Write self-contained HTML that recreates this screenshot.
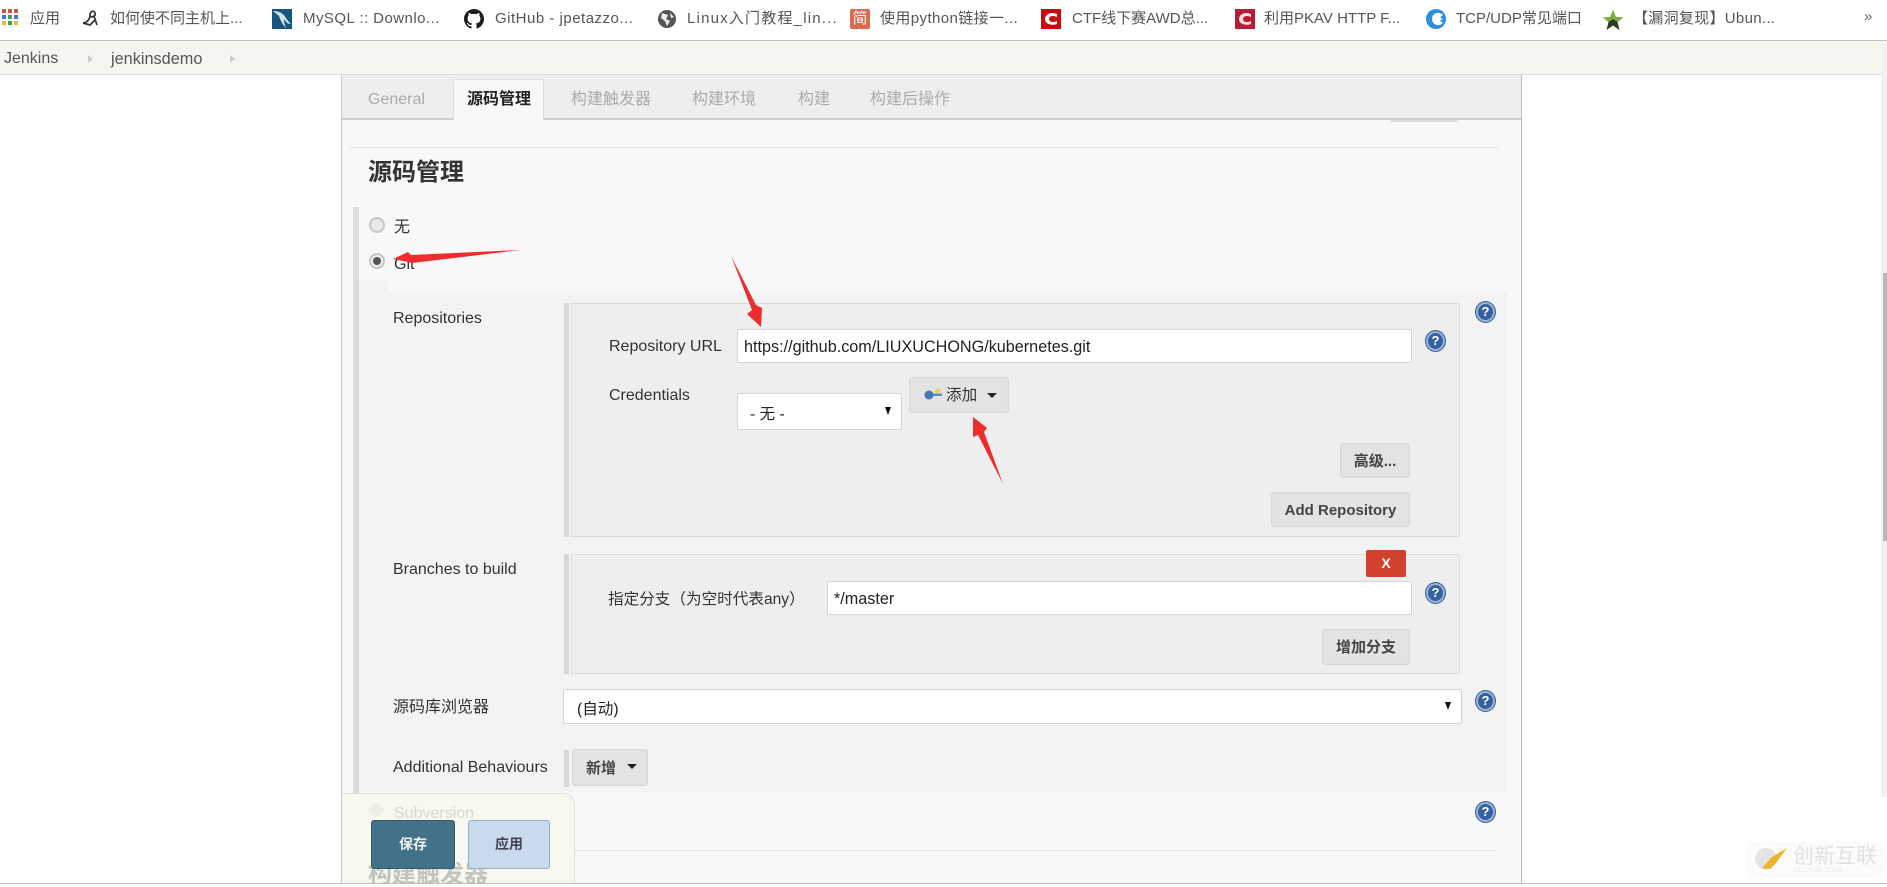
<!DOCTYPE html>
<html>
<head>
<meta charset="utf-8">
<style>
html,body{margin:0;padding:0;width:1887px;height:887px;overflow:hidden;background:#fff}
body{position:relative;font-family:"Liberation Sans","Noto Sans CJK SC",sans-serif;color:#333}
.a{position:absolute}
.t{position:absolute;white-space:nowrap;font-size:16px;line-height:20px;height:20px;color:#333}
.bm{position:absolute;white-space:nowrap;font-size:15px;line-height:20px;top:9px;color:#555}
.ic{position:absolute;top:9px;width:20px;height:20px}
.tab{position:absolute;white-space:nowrap;font-size:15.6px;line-height:20px;top:90px;color:#aaa}
.btn{position:absolute;background:#e3e3e3;border:1px solid #d8d8d8;border-radius:3px;box-sizing:border-box;box-shadow:inset 0 0 0 1px #e0e0e0;font-size:15px;font-weight:bold;color:#444;text-align:center;white-space:nowrap}
.inp{position:absolute;background:#fff;border:1px solid #d4d4d4;border-radius:2px;box-sizing:border-box;font-size:16.2px;color:#222;white-space:nowrap}
.block{position:absolute;background:#eee;border:1px solid #ddd;box-sizing:border-box}
.bar{position:absolute;background:#d8d8d8}
.help{position:absolute;width:21px;height:22px;border-radius:50%;box-sizing:border-box;background:#35619f;border:1px solid #3b5f98;box-shadow:inset 0 0 0 2px #9fb6da;color:#fff;font-size:13px;font-weight:bold;line-height:20px;text-align:center}
.caret{position:absolute;width:0;height:0;border-left:5px solid transparent;border-right:5px solid transparent;border-top:5px solid #222}
.sel{position:absolute;width:0;height:0;border-left:3.5px solid transparent;border-right:3.5px solid transparent;border-top:8px solid #111}
.radio{position:absolute;width:16px;height:16px;border-radius:50%;box-sizing:border-box;border:2px solid #c6c6c6;background:#e8e8e8}
</style>
</head>
<body>
<!-- Bookmarks bar -->
<div class="a" style="left:0;top:0;width:1887px;height:40px;background:#fff"></div>
<div class="a" style="left:0;top:40px;width:1887px;height:1px;background:#c4c4c4"></div>
<svg class="a" style="left:2px;top:9px" width="16" height="17" viewBox="0 0 16 17">
<rect x="0" y="0" width="4" height="4" fill="#d9503f"/><rect x="6" y="0" width="4" height="4" fill="#d9503f"/><rect x="12" y="0" width="4" height="4" fill="#d9503f"/>
<rect x="0" y="6" width="4" height="4" fill="#3b78d8"/><rect x="6" y="6" width="4" height="4" fill="#3aa757"/><rect x="12" y="6" width="4" height="4" fill="#3b78d8"/>
<rect x="0" y="12" width="4" height="4" fill="#f1b92e"/><rect x="6" y="12" width="4" height="4" fill="#3aa757"/><rect x="12" y="12" width="4" height="4" fill="#f1b92e"/>
</svg>
<div class="bm" style="left:30px">应用</div>
<svg class="a" style="left:81px;top:8px" width="19" height="20" viewBox="0 0 19 20"><path d="M2 15 C5 15 9 12 9 7 C9 3 13 2 14 5 C15 8 11 10 9 8 M13 8 L16 17 M2 15 L9 17 L14 12" fill="none" stroke="#333" stroke-width="1.7"/></svg>
<div class="bm" style="left:110px">如何使不同主机上...</div>
<svg class="ic" style="left:272px" viewBox="0 0 20 20"><rect width="20" height="20" fill="#15577f"/><path d="M1 2 C7 2 11 4 14 9 C16 12 18 14 19 15 C15 15 14 13 12 10 C12 14 13 16 14 19 C10 15 8 10 7 7 C5 5 3 4 1 2Z" fill="#cfe0ea"/></svg>
<div class="bm" style="left:303px;letter-spacing:.45px">MySQL :: Downlo...</div>
<svg class="ic" style="left:464px" viewBox="0 0 16 16"><path fill="#1b1f23" d="M8 0C3.58 0 0 3.58 0 8c0 3.54 2.29 6.53 5.47 7.59.4.07.55-.17.55-.38 0-.19-.01-.82-.01-1.49-2.01.37-2.53-.49-2.69-.94-.09-.23-.48-.94-.82-1.13-.28-.15-.68-.52-.01-.53.63-.01 1.08.58 1.23.82.72 1.21 1.87.87 2.33.66.07-.52.28-.87.51-1.07-1.78-.2-3.64-.89-3.64-3.95 0-.87.31-1.59.82-2.15-.08-.2-.36-1.02.08-2.12 0 0 .67-.21 2.2.82.64-.18 1.32-.27 2-.27s1.36.09 2 .27c1.53-1.04 2.2-.82 2.2-.82.44 1.1.16 1.92.08 2.12.51.56.82 1.27.82 2.15 0 3.07-1.87 3.75-3.65 3.95.29.25.54.73.54 1.48 0 1.07-.01 1.93-.01 2.2 0 .21.15.46.55.38A8.01 8.01 0 0 0 16 8c0-4.42-3.58-8-8-8z"/></svg>
<div class="bm" style="left:495px;letter-spacing:.5px">GitHub - jpetazzo...</div>
<svg class="ic" style="left:658px;width:18px;height:18px;top:10px" viewBox="0 0 18 18"><circle cx="9" cy="9" r="9" fill="#555"/><path d="M4 3 L10 5 L8 9 L12 11 L9 16 L7 11 L3 8Z M12 3 L16 7 L13 8Z" fill="#eee"/></svg>
<div class="bm" style="left:687px;letter-spacing:1.2px">Linux入门教程_lin...</div>
<div class="a" style="left:850px;top:9px;width:20px;height:20px;background:#dc6a51;border-radius:2px;color:#fff;font-size:15px;line-height:20px;text-align:center">简</div>
<div class="bm" style="left:880px;letter-spacing:.4px">使用python链接一...</div>
<svg class="ic" style="left:1041px" viewBox="0 0 20 20"><rect width="20" height="20" fill="#c70c12"/><path d="M16 5 C9 2 4 6 4 10 C4 15 10 17 16 15 L16 12 C12 14 8 13 8 10 C8 7 12 6 16 8Z" fill="#fff"/></svg>
<div class="bm" style="left:1072px">CTF线下赛AWD总...</div>
<svg class="ic" style="left:1235px" viewBox="0 0 20 20"><rect width="20" height="20" fill="#b71d33"/><path d="M16 5 C9 2 4 6 4 10 C4 15 10 17 16 15 L16 12 C12 14 8 13 8 10 C8 7 12 6 16 8Z" fill="#f3dfe2"/></svg>
<div class="bm" style="left:1264px">利用PKAV HTTP F...</div>
<svg class="ic" style="left:1426px" viewBox="0 0 20 20"><circle cx="10" cy="10" r="10" fill="#2a8fe0"/><path d="M17 6 C13 2 6 4 6 10 C6 16 13 18 17 14 L14 11.5 L17 10 L14 8.5Z" fill="#fff"/></svg>
<div class="bm" style="left:1456px">TCP/UDP常见端口</div>
<svg class="ic" style="left:1603px;top:10px" viewBox="0 0 20 20"><path d="M10 0 L12.8 7 L20 7.5 L14.5 12 L16.5 20 L10 15.5 L3.5 20 L5.5 12 L0 7.5 L7.2 7Z" fill="#2c3a20"/><path d="M10 0 L12.8 7 L20 7.5 L14.5 12 L10 9 L5.5 12 L0 7.5 L7.2 7Z" fill="#7fae3a"/></svg>
<div class="bm" style="left:1633px;letter-spacing:.3px">【漏洞复现】Ubun...</div>
<div class="bm" style="left:1864px;top:7px;color:#666">»</div>

<!-- Breadcrumb bar -->
<div class="a" style="left:0;top:41px;width:1887px;height:33px;background:#f6f6f1"></div>
<div class="a" style="left:0;top:74px;width:1887px;height:1px;background:#dedede"></div>
<div class="t" style="left:4px;top:49px;color:#555">Jenkins</div>
<div class="a" style="left:88px;top:55px;border-left:5px solid #ccc;border-top:4px solid transparent;border-bottom:4px solid transparent"></div>
<div class="t" style="left:111px;top:49px;font-size:16.3px;color:#555">jenkinsdemo</div>
<div class="a" style="left:230px;top:55px;border-left:5px solid #ccc;border-top:4px solid transparent;border-bottom:4px solid transparent"></div>

<!-- Main panel -->
<div class="a" style="left:342px;top:75px;width:1179px;height:808px;background:#f8f8f8"></div>
<div class="a" style="left:341px;top:75px;width:1px;height:808px;background:#c8c8c8"></div>
<div class="a" style="left:1521px;top:75px;width:1px;height:808px;background:#c0c0c0"></div>

<!-- Tabs -->
<div class="a" style="left:342px;top:75px;width:1179px;height:44px;background:#eee"></div>
<div class="a" style="left:342px;top:118px;width:1179px;height:2px;background:#cfcfcf"></div>
<div class="a" style="left:453px;top:79px;width:91px;height:41px;background:#f8f8f8;border:1px solid #ddd;border-bottom:none;border-radius:3px 3px 0 0;box-sizing:border-box"></div>
<div class="tab" style="left:368px;font-size:16px">General</div>
<div class="tab" style="left:467px;color:#222;font-weight:bold;font-size:16px">源码管理</div>
<div class="tab" style="left:571px;font-size:16px">构建触发器</div>
<div class="tab" style="left:692px;font-size:16px">构建环境</div>
<div class="tab" style="left:798px;font-size:16px">构建</div>
<div class="tab" style="left:870px;font-size:16px">构建后操作</div>
<div class="a" style="left:1391px;top:120px;width:67px;height:2px;background:#ddd"></div>
<div class="a" style="left:350px;top:147px;width:1148px;height:1px;background:#e4e4e4"></div>

<div class="t" style="left:368px;top:158px;font-size:24px;line-height:30px;height:30px;font-weight:bold;color:#333">源码管理</div>

<!-- Left bar and git region -->
<div class="a" style="left:358px;top:280px;width:30px;height:13px;background:#f3f3f3"></div>
<div class="a" style="left:358px;top:293px;width:1149px;height:499px;background:#f3f3f3"></div>
<div class="bar" style="left:353px;top:207px;width:6px;height:586px;background:#dcdcdc"></div>

<div class="radio" style="left:369px;top:217px"></div>
<div class="t" style="left:394px;top:218px">无</div>
<div class="radio" style="left:369px;top:253px;background:#eee"></div>
<div class="a" style="left:373px;top:257px;width:8px;height:8px;border-radius:50%;background:#555"></div>
<div class="t" style="left:394px;top:255px">Git</div>

<!-- Repositories -->
<div class="t" style="left:393px;top:309px">Repositories</div>
<div class="bar" style="left:564px;top:303px;width:5px;height:234px"></div>
<div class="block" style="left:571px;top:303px;width:889px;height:234px"></div>
<div class="t" style="left:609px;top:337px">Repository URL</div>
<div class="inp" style="left:737px;top:329px;width:675px;height:34px;padding:0 6px;line-height:34px">https://github.com/LIUXUCHONG/kubernetes.git</div>
<div class="help" style="left:1425px;top:330px">?</div>
<div class="help" style="left:1475px;top:301px">?</div>
<div class="t" style="left:609px;top:386px">Credentials</div>
<div class="inp" style="left:737px;top:393px;width:165px;height:37px;padding:0 12px;line-height:42px;font-size:15.6px">- 无 -</div>
<div class="sel" style="left:885px;top:407px"></div>
<div class="btn" style="left:909px;top:377px;width:100px;height:36px;line-height:34px;font-weight:normal;color:#333"></div>
<svg class="a" style="left:923px;top:386px" width="20" height="16" viewBox="0 0 20 16"><path d="M11 6 Q15 1 18 3 Q19 6 14 7Z" fill="#f2d24b"/><rect x="7" y="7.5" width="12" height="2.5" fill="#5c8cc0"/><circle cx="6" cy="9" r="4.5" fill="#3f78b4"/></svg>
<div class="t" style="left:946px;top:386px;font-size:15.6px;color:#333">添加</div>
<div class="caret" style="left:987px;top:393px"></div>
<div class="btn" style="left:1340px;top:443px;width:70px;height:35px;line-height:35px">高级...</div>
<div class="btn" style="left:1271px;top:492px;width:139px;height:35px;line-height:35px">Add Repository</div>

<!-- Branches -->
<div class="t" style="left:393px;top:560px">Branches to build</div>
<div class="bar" style="left:564px;top:554px;width:5px;height:120px"></div>
<div class="block" style="left:571px;top:554px;width:889px;height:120px"></div>
<div class="a" style="left:1366px;top:550px;width:40px;height:27px;background:#d2402f;border-radius:2px;color:#fff;font-size:14px;font-weight:bold;line-height:27px;text-align:center">X</div>
<div class="t" style="left:608px;top:590px;font-size:15.6px">指定分支（为空时代表any）</div>
<div class="inp" style="left:827px;top:581px;width:585px;height:34px;padding:0 6px;line-height:34px">*/master</div>
<div class="help" style="left:1425px;top:582px">?</div>
<div class="btn" style="left:1322px;top:629px;width:88px;height:36px;line-height:36px">增加分支</div>

<!-- Source browser -->
<div class="t" style="left:393px;top:698px">源码库浏览器</div>
<div class="inp" style="left:563px;top:689px;width:899px;height:35px;padding:0 13px;line-height:40px;font-size:15.6px">(自动)</div>
<div class="sel" style="left:1445px;top:702px"></div>
<div class="help" style="left:1475px;top:690px">?</div>

<!-- Additional -->
<div class="t" style="left:393px;top:758px">Additional Behaviours</div>
<div class="bar" style="left:564px;top:750px;width:5px;height:37px"></div>
<div class="btn" style="left:572px;top:749px;width:76px;height:37px;line-height:37px;text-align:left;padding-left:13px">新增</div>
<div class="caret" style="left:627px;top:764px"></div>

<!-- Below -->
<div class="help" style="left:1475px;top:801px">?</div>
<div class="a" style="left:575px;top:850px;width:922px;height:1px;background:#e4e4e4"></div>

<!-- Sticky footer -->
<div class="a" style="left:342px;top:793px;width:233px;height:90px;background:#f8f8f0;border:1px solid #e0e0da;border-left:none;border-bottom:none;border-radius:0 12px 0 0;box-sizing:border-box"></div>
<div class="a" style="left:369px;top:803px;width:14px;height:14px;border-radius:50%;background:#efefe8"></div>
<div class="t" style="left:394px;top:804px;color:#d8d8d2">Subversion</div>
<div class="a" style="left:368px;top:860px;width:125px;height:23px;overflow:hidden"><div style="font-size:24px;font-weight:bold;color:#c4c4bd;line-height:30px;white-space:nowrap;margin-top:0">构建触发器</div></div>
<div class="a" style="left:371px;top:820px;width:84px;height:49px;box-sizing:border-box;background:#427287;border:1px solid #2f5a70;border-radius:3px;color:#f2f2f2;font-size:14px;font-weight:bold;line-height:47px;text-align:center">保存</div>
<div class="a" style="left:468px;top:820px;width:82px;height:49px;box-sizing:border-box;background:#c8daec;border:1px solid #8fb0d0;border-radius:3px;color:#445;font-size:14px;font-weight:bold;line-height:47px;text-align:center">应用</div>

<!-- Bottom line -->
<div class="a" style="left:0;top:883px;width:1887px;height:1px;background:#bdbdbd"></div>

<!-- Scrollbar -->
<div class="a" style="left:1881px;top:41px;width:6px;height:756px;background:#f1f1f1"></div>
<div class="a" style="left:1883px;top:273px;width:4px;height:268px;background:#b8b8b8"></div>

<!-- Red arrows -->
<svg class="a" style="left:0;top:0;pointer-events:none" width="1887" height="887" viewBox="0 0 1887 887">
<path d="M393 259 L408 252 L411 255 L521 250 L412 263 L408 262Z" fill="#ee2c2c"/>
<path d="M731 256 L756 305 L762 308 L761 327 L747 314 L752 310Z" fill="#ee2c2c"/>
<path d="M973 417 L987 428 L984 432 L1003 484 L978 435 L973 437Z" fill="#ee2c2c"/>
</svg>

<!-- Watermark -->
<div class="a" style="left:1745px;top:842px;width:142px;height:36px;background:#fbfbfb;border-radius:14px"></div>
<svg class="a" style="left:1750px;top:843px" width="42" height="32" viewBox="0 0 42 32"><circle cx="16" cy="16" r="12.5" fill="#e4e4e4" stroke="#fff" stroke-width="3"/><path d="M12 25 L22 14 L37 5 L26 20 L20 26Z" fill="#f0b429"/></svg>
<div class="a" style="left:1793px;top:846px;font-size:21px;line-height:22px;color:#e2e2e2;white-space:nowrap">创新互联</div>
<div class="a" style="left:1793px;top:868px;font-size:6px;line-height:7px;color:#ebebeb;white-space:nowrap;letter-spacing:1px">CDCXHL.COM</div>
</body>
</html>
